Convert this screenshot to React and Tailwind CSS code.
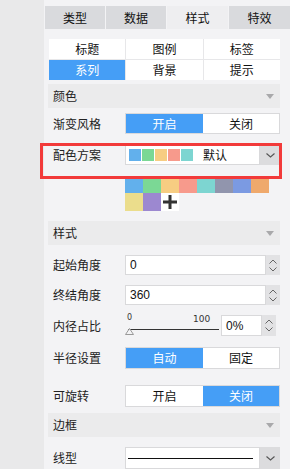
import React from "react";

const FONT = { fontFamily: '"Noto Sans CJK SC", "Noto Sans", sans-serif' };

function Tri() {
  return (
    <svg width="8" height="5" viewBox="0 0 8 5" className="mr-[6px]">
      <path d="M0 0 L8 0 L4 5 Z" fill="#a9a9ab" />
    </svg>
  );
}

function Header({ title, mt }) {
  return (
    <div className={`${mt} h-[24px] bg-[#ebebec] flex items-center justify-between pl-[5px] text-[12px] text-[#222]`}>
      <span>{title}</span>
      <Tri />
    </div>
  );
}

function Row({ label, mt, h, children }) {
  return (
    <div className={`${mt} ${h} flex items-center`}>
      <div className="w-[77px] pl-[5px] text-[12px] text-[#222] leading-none">{label}</div>
      <div className="flex-1 h-full flex">{children}</div>
    </div>
  );
}

function Toggle({ left, right, active }) {
  const on = "bg-[#459ef6] text-white";
  const off = "bg-white text-[#111]";
  return (
    <div className="w-[155px] h-full flex border border-[#d9d9db] text-[12px]">
      <div className={`w-[77px] flex items-center justify-center ${active === 0 ? on : off}`}>{left}</div>
      <div className={`flex-1 flex items-center justify-center ${active === 1 ? on : off}`}>{right}</div>
    </div>
  );
}

function Spinner() {
  return (
    <div className="w-[14px] h-full bg-[#e2e2e4] flex flex-col items-center justify-center gap-[3px]">
      <svg width="8" height="5" viewBox="0 0 8 5"><path d="M0.5 4.5 L4 1 L7.5 4.5" fill="none" stroke="#666" strokeWidth="1" /></svg>
      <svg width="8" height="5" viewBox="0 0 8 5"><path d="M0.5 0.5 L4 4 L7.5 0.5" fill="none" stroke="#666" strokeWidth="1" /></svg>
    </div>
  );
}

function DropBtn() {
  return (
    <div className="w-[20px] h-full bg-[#dcdcde] flex items-center justify-center">
      <svg width="9" height="5" viewBox="0 0 9 5"><path d="M0.5 0.5 L4.5 4 L8.5 0.5" fill="none" stroke="#555" strokeWidth="1.1" /></svg>
    </div>
  );
}

function NumInput({ value }) {
  return (
    <div className="w-[155px] h-full flex">
      <div className="flex-1 bg-white border border-[#d9d9db] flex items-center pl-[4px] text-[12px] text-[#111]" style={{ fontFamily: '"Liberation Sans", Arial, sans-serif' }}>
        {value}
      </div>
      <Spinner />
    </div>
  );
}

const paletteRow1 = ["#62b0ec", "#7bd895", "#f7cd82", "#f79a8c", "#7dd5d1", "#9195ad", "#7b9ae2", "#efa96c"];

export default function App() {
  return (
    <div className="w-[290px] h-[469px] overflow-hidden flex relative" style={FONT}>
      <div className="w-[44px] h-full bg-[#e9e9ea]" />
      <div className="flex-1 h-full bg-[#f3f3f5] flex flex-col">
        {/* tabs */}
        <div className="mt-[6px] h-[25px] flex gap-[1px] pl-[1px] text-[12px] text-[#111]">
          <div className="w-[60px] bg-[#d9dadd] flex items-center justify-center">类型</div>
          <div className="w-[60px] bg-[#d9dadd] flex items-center justify-center">数据</div>
          <div className="w-[61px] bg-[#eeeef0] flex items-center justify-center">样式</div>
          <div className="flex-1 bg-[#d9dadd] flex items-center justify-center">特效</div>
        </div>

        <div className="ml-[4px] mr-[10px] flex flex-col">
          {/* sub tabs */}
          <div className="mt-[10px] ml-[1px] grid grid-cols-3 gap-[1px] bg-[#e7e7e9] text-[12px] text-[#111]">
            <div className="h-[20px] bg-white flex items-center justify-center">标题</div>
            <div className="h-[20px] bg-white flex items-center justify-center">图例</div>
            <div className="h-[20px] bg-white flex items-center justify-center">标签</div>
            <div className="h-[20px] bg-[#459ef6] text-white flex items-center justify-center">系列</div>
            <div className="h-[20px] bg-white flex items-center justify-center">背景</div>
            <div className="h-[20px] bg-white flex items-center justify-center">提示</div>
          </div>

          <Header title="颜色" mt="mt-[4px]" />

          <Row label="渐变风格" mt="mt-[5px]" h="h-[21px]">
            <Toggle left="开启" right="关闭" active={0} />
          </Row>

          <Row label="配色方案" mt="mt-[11px]" h="h-[20px]">
            <div className="w-[155px] h-full flex">
              <div className="flex-1 bg-white border border-[#d9d9db] flex items-center pl-[3px]">
                <div className="flex gap-[1px]">
                  {paletteRow1.slice(0, 5).map((c) => (
                    <div key={c} className="w-[12px] h-[12px]" style={{ backgroundColor: c }} />
                  ))}
                </div>
                <span className="ml-[10px] text-[12px] text-[#111]">默认</span>
              </div>
              <DropBtn />
            </div>
          </Row>

          {/* palette */}
          <div className="mt-[12px] ml-[77px] flex flex-col">
            <div className="flex">
              {paletteRow1.map((c) => (
                <div key={c} className="w-[18px] h-[16px]" style={{ backgroundColor: c }} />
              ))}
            </div>
            <div className="flex">
              <div className="w-[18px] h-[18px] bg-[#ebdd8c]" />
              <div className="w-[18px] h-[18px] bg-[#9c88d0]" />
              <div className="w-[18px] h-[18px] bg-white flex items-center justify-center">
                <svg width="14" height="14" viewBox="0 0 14 14">
                  <path d="M7 0 V14 M0 7 H14" stroke="#333" strokeWidth="3" />
                </svg>
              </div>
            </div>
          </div>

          <Header title="样式" mt="mt-[10px]" />

          <Row label="起始角度" mt="mt-[10px]" h="h-[20px]">
            <NumInput value="0" />
          </Row>
          <Row label="终结角度" mt="mt-[10px]" h="h-[20px]">
            <NumInput value="360" />
          </Row>

          <Row label="内径占比" mt="mt-[10px]" h="h-[21px]">
            <div className="w-[155px] h-full flex">
              <div className="w-[96px] relative h-full" style={{ fontFamily: '"DejaVu Sans", sans-serif' }}>
                <span className="absolute left-[2px] top-[-1px] text-[8px] leading-none text-[#333]">0</span>
                <span className="absolute left-[68px] top-[0px] text-[9px] leading-none text-[#333]">100</span>
                <div className="absolute left-[3px] top-[14px] w-[91px] h-[1px] bg-[#333]" />
                <svg className="absolute left-[0px] top-[13px]" width="9" height="7" viewBox="0 0 9 7">
                  <path d="M4.5 0.5 L8.5 6.5 L0.5 6.5 Z" fill="#f3f3f5" stroke="#999" strokeWidth="1" />
                </svg>
              </div>
              <div className="w-[41px] h-full bg-white border border-[#d9d9db] flex items-center pl-[4px] text-[12px] text-[#111]" style={{ fontFamily: '"Liberation Sans", Arial, sans-serif' }}>
                0%
              </div>
              <Spinner />
            </div>
          </Row>

          <Row label="半径设置" mt="mt-[11px]" h="h-[22px]">
            <Toggle left="自动" right="固定" active={0} />
          </Row>

          <Row label="可旋转" mt="mt-[16px]" h="h-[22px]">
            <Toggle left="开启" right="关闭" active={1} />
          </Row>

          <Header title="边框" mt="mt-[6px]" />

          <Row label="线型" mt="mt-[10px]" h="h-[22px]">
            <div className="w-[155px] h-full flex">
              <div className="flex-1 bg-white border border-[#d9d9db] flex items-center px-[2px]">
                <div className="w-full h-[1px] bg-[#111] mr-[4px]" />
              </div>
              <DropBtn />
            </div>
          </Row>
        </div>
      </div>

      {/* annotation box */}
      <div className="absolute left-[40px] top-[143px] w-[242px] h-[36px] border-[3px] border-[#f23a3a] pointer-events-none" />
    </div>
  );
}
